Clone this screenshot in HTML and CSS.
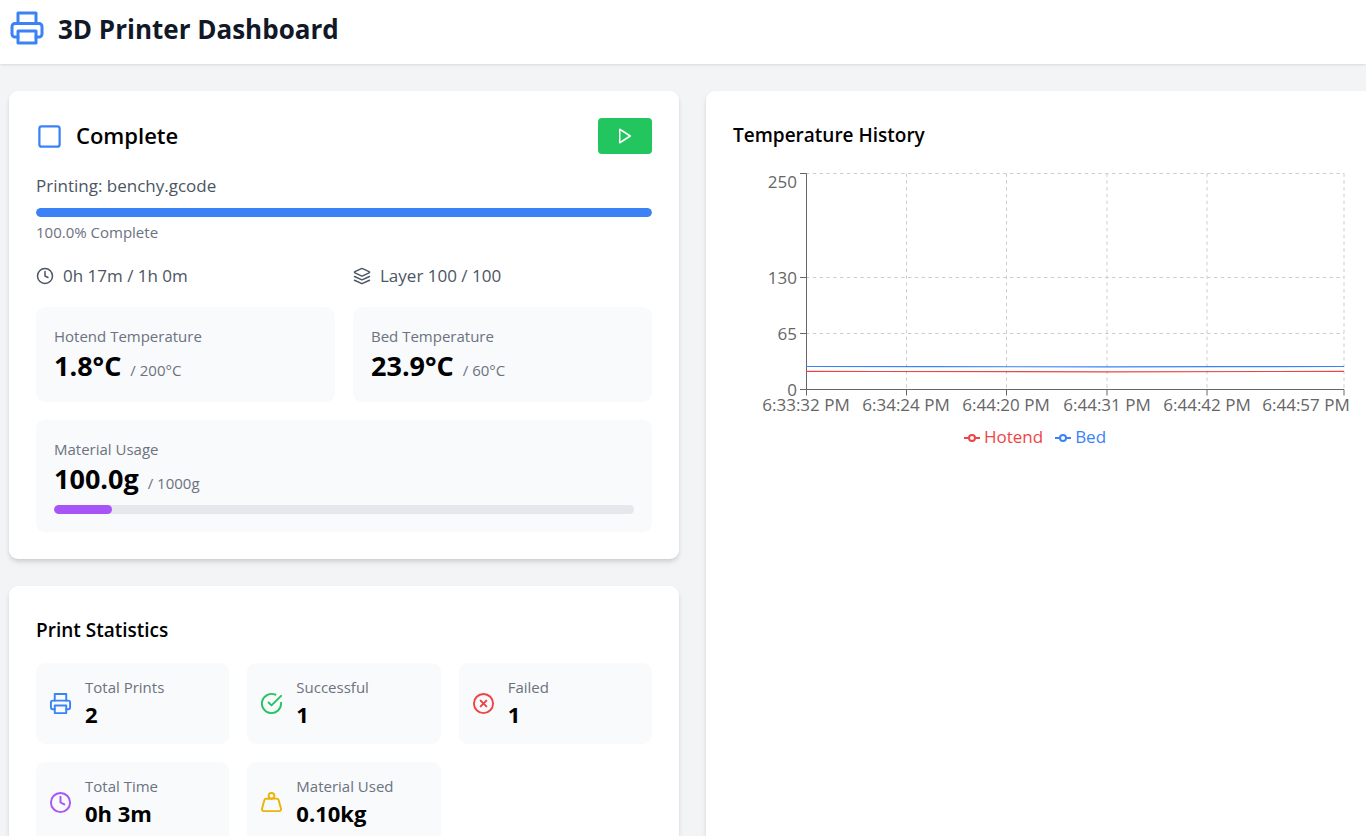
FILE: index.html
```html
<!DOCTYPE html>
<html lang="en">
<head>
<meta charset="utf-8">
<meta name="viewport" content="width=device-width, initial-scale=1">
<title>3D Printer Dashboard</title>
<link rel="stylesheet" href="styles.css">
</head>
<body>
<svg class="sprite" aria-hidden="true">
  <symbol id="i-printer" viewBox="0 0 24 24"><path d="M6 9V2h12v7"/><path d="M6 18H4a2 2 0 0 1-2-2v-5a2 2 0 0 1 2-2h16a2 2 0 0 1 2 2v5a2 2 0 0 1-2 2h-2"/><path d="M6 14h12v8H6z"/></symbol>
  <symbol id="i-square" viewBox="0 0 24 24"><rect x="3" y="3" width="18" height="18" rx="2"/></symbol>
  <symbol id="i-play" viewBox="0 0 24 24"><path d="M5 3l14 9-14 9z"/></symbol>
  <symbol id="i-clock" viewBox="0 0 24 24"><circle cx="12" cy="12" r="10"/><path d="M12 6v6l4 2"/></symbol>
  <symbol id="i-layers" viewBox="0 0 24 24"><path d="m12.83 2.18a2 2 0 0 0-1.66 0L2.6 6.08a1 1 0 0 0 0 1.83l8.58 3.91a2 2 0 0 0 1.66 0l8.58-3.9a1 1 0 0 0 0-1.83Z"/><path d="m22 17.65-9.17 4.16a2 2 0 0 1-1.66 0L2 17.65"/><path d="m22 12.65-9.17 4.16a2 2 0 0 1-1.66 0L2 12.65"/></symbol>
  <symbol id="i-check" viewBox="0 0 24 24"><path d="M22 11.08V12a10 10 0 1 1-5.93-9.14"/><path d="m9 11 3 3L22 4"/></symbol>
  <symbol id="i-x" viewBox="0 0 24 24"><circle cx="12" cy="12" r="10"/><path d="m15 9-6 6"/><path d="m9 9 6 6"/></symbol>
  <symbol id="i-weight" viewBox="0 0 24 24"><circle cx="12" cy="5" r="3"/><path d="M6.5 8a2 2 0 0 0-1.905 1.46L2.1 18.5A2 2 0 0 0 4 21h16a2 2 0 0 0 1.925-2.54L19.4 9.5A2 2 0 0 0 17.48 8Z"/></symbol>
</svg>

<header class="topbar">
  <svg class="icon icon-xl blue" aria-hidden="true"><use href="#i-printer"/></svg>
  <h1 class="topbar-title">3D Printer Dashboard</h1>
</header>

<main class="dashboard">
  <div class="column">
    <section class="card">
      <div class="status-head">
        <svg class="icon icon-lg blue" aria-hidden="true"><use href="#i-square"/></svg>
        <h2 class="status-title">Complete</h2>
        <button class="play" type="button" aria-label="Start print"><svg class="icon icon-sm" aria-hidden="true"><use href="#i-play"/></svg></button>
      </div>
      <div class="job">
        <p class="job-name">Printing: benchy.gcode</p>
        <div class="track" role="progressbar" aria-label="Print progress" aria-valuenow="100"><div class="fill fill-blue" style="width:100%"></div></div>
        <p class="label job-percent">100.0% Complete</p>
      </div>
      <div class="pair">
        <div class="meta"><svg class="icon icon-sm" aria-hidden="true"><use href="#i-clock"/></svg><span>0h 17m / 1h 0m</span></div>
        <div class="meta"><svg class="icon icon-sm" aria-hidden="true"><use href="#i-layers"/></svg><span>Layer 100 / 100</span></div>
      </div>
      <div class="pair">
        <div class="panel">
          <p class="label">Hotend Temperature</p>
          <p class="reading"><strong>1.8°C</strong><span class="label">/ 200°C</span></p>
        </div>
        <div class="panel">
          <p class="label">Bed Temperature</p>
          <p class="reading"><strong>23.9°C</strong><span class="label">/ 60°C</span></p>
        </div>
      </div>
      <div class="panel">
        <p class="label">Material Usage</p>
        <p class="reading"><strong>100.0g</strong><span class="label">/ 1000g</span></p>
        <div class="track track-material" role="progressbar" aria-label="Material usage" aria-valuenow="10"><div class="fill fill-purple" style="width:10%"></div></div>
      </div>
    </section>

    <section class="card">
      <h2 class="card-title">Print Statistics</h2>
      <div class="stats">
        <div class="stat"><svg class="icon icon-md blue" aria-hidden="true"><use href="#i-printer"/></svg><div><p class="label">Total Prints</p><p class="stat-value">2</p></div></div>
        <div class="stat"><svg class="icon icon-md green" aria-hidden="true"><use href="#i-check"/></svg><div><p class="label">Successful</p><p class="stat-value">1</p></div></div>
        <div class="stat"><svg class="icon icon-md red" aria-hidden="true"><use href="#i-x"/></svg><div><p class="label">Failed</p><p class="stat-value">1</p></div></div>
        <div class="stat"><svg class="icon icon-md purple" aria-hidden="true"><use href="#i-clock"/></svg><div><p class="label">Total Time</p><p class="stat-value">0h 3m</p></div></div>
        <div class="stat"><svg class="icon icon-md yellow" aria-hidden="true"><use href="#i-weight"/></svg><div><p class="label">Material Used</p><p class="stat-value">0.10kg</p></div></div>
      </div>
    </section>
  </div>

  <section class="card history">
    <h2 class="card-title">Temperature History</h2>
    <svg class="chart" viewBox="0 0 616 255" role="img" aria-label="Hotend and bed temperature over time">
      <g class="grid">
        <path d="M73 5.5H611M73 109.5H611M73 165.5H611"/>
        <path d="M173.5 5.5V221M273.5 5.5V221M374 5.5V221M474 5.5V221M611 5.5V221"/>
      </g>
      <path class="axis" d="M73.5 5.5V221.5M67 5.5H73.5M67 109.5H73.5M67 165.5H73.5M67 221.5H611M73.5 221.5V227.5M173.5 221.5V227.5M273.5 221.5V227.5M374 221.5V227.5M474 221.5V227.5M611 221.5V227.5"/>
      <path class="line line-hotend" d="M73 203.4L142 203.5L374 203.8L541 203.5L611 203.4"/>
      <path class="line line-bed" d="M73 198.5L196 198.6L374 198.9L488 198.6L611 198.5"/>
      <g class="tick tick-y">
        <text x="64" y="20">250</text>
        <text x="64" y="116">130</text>
        <text x="64" y="172">65</text>
        <text x="64" y="228">0</text>
      </g>
      <g class="tick tick-x">
        <text x="73" y="243">6:33:32 PM</text>
        <text x="173" y="243">6:34:24 PM</text>
        <text x="273" y="243">6:44:20 PM</text>
        <text x="374" y="243">6:44:31 PM</text>
        <text x="474" y="243">6:44:42 PM</text>
        <text x="573" y="243">6:44:57 PM</text>
      </g>
    </svg>
    <ul class="legend">
      <li class="legend-item red"><svg class="legend-mark" viewBox="0 0 16 16" aria-hidden="true"><path d="M0 9h5M11 9h5"/><circle cx="8" cy="9" r="3"/></svg>Hotend</li>
      <li class="legend-item blue"><svg class="legend-mark" viewBox="0 0 16 16" aria-hidden="true"><path d="M0 9h5M11 9h5"/><circle cx="8" cy="9" r="3"/></svg>Bed</li>
    </ul>
  </section>
</main>
</body>
</html>
```
FILE: styles.css
```css
* { box-sizing: border-box; }

body {
  margin: 0;
  background: #f3f4f6;
  color: #000;
  font-family: "Open Sans", "Noto Sans", sans-serif;
  font-size: 17px;
  line-height: 27px;
  overflow-x: hidden;
}

h1, h2, p, ul { margin: 0; padding: 0; }

.sprite { display: none; }

.icon {
  flex: none;
  fill: none;
  stroke: currentColor;
  stroke-width: 2;
  stroke-linecap: round;
  stroke-linejoin: round;
}
.icon-sm { width: 18px; height: 18px; }
.icon-md { width: 23px; height: 23px; }
.icon-lg { width: 27px; height: 27px; }
.icon-xl { width: 36px; height: 36px; }

.blue { color: #3b82f6; }
.green { color: #22c55e; }
.red { color: #ef4444; }
.purple { color: #a855f7; }
.yellow { color: #eab308; }

.topbar {
  display: flex;
  align-items: center;
  gap: 13px;
  padding: 10px 9px 18px;
  background: #fff;
  box-shadow: 0 1px 3px rgba(0, 0, 0, 0.08), 0 1px 2px rgba(0, 0, 0, 0.04);
}
.topbar-title {
  padding-top: 2px;
  color: #111827;
  font-size: 26px;
  font-weight: 700;
  line-height: 34px;
}

/* The second column runs slightly past the right edge of the window. */
.dashboard {
  display: grid;
  grid-template-columns: repeat(2, minmax(0, 1fr));
  gap: 27px;
  margin-right: -10px;
  padding: 27px 0 27px 9px;
}
.column {
  display: flex;
  flex-direction: column;
  gap: 27px;
}

.card {
  display: flex;
  flex-direction: column;
  gap: 18px;
  padding: 27px;
  background: #fff;
  border-radius: 9px;
  box-shadow: 0 4px 6px -1px rgba(0, 0, 0, 0.1), 0 2px 4px -1px rgba(0, 0, 0, 0.1);
}
.card-title {
  padding-top: 2px;
  font-size: 19px;
  font-weight: 600;
  line-height: 30px;
}

.status-head {
  display: flex;
  align-items: center;
  gap: 13px;
}
.status-title {
  flex: 1;
  padding-bottom: 2px;
  font-size: 22px;
  font-weight: 600;
  line-height: 30px;
}
.play {
  display: flex;
  align-items: center;
  justify-content: center;
  width: 54px;
  height: 36px;
  padding: 0;
  border: 0;
  border-radius: 4px;
  background: #22c55e;
  color: #fff;
}

.job-name { margin-bottom: 9px; color: #4b5563; }
.job-percent { margin-top: 4px; }

.label {
  color: #6b7280;
  font-size: 15px;
  font-weight: 400;
  line-height: 23px;
}

.track {
  height: 9px;
  overflow: hidden;
  border-radius: 5px;
  background: #e5e7eb;
}
.track-material { margin-top: 8px; }
.fill { height: 100%; border-radius: 5px; }
.fill-blue { background: #3b82f6; }
.fill-purple { background: #a855f7; }

.pair {
  display: grid;
  grid-template-columns: 1fr 1fr;
  gap: 18px;
}
.meta {
  display: flex;
  align-items: center;
  gap: 9px;
  color: #4b5563;
}

.panel {
  padding: 18px;
  border-radius: 9px;
  background: #f9fafb;
}
.reading {
  display: flex;
  align-items: baseline;
  gap: 9px;
  height: 36px;
  font-size: 27px;
  line-height: 36px;
}

.stats {
  display: grid;
  grid-template-columns: repeat(3, 1fr);
  gap: 18px;
}
.stat {
  display: flex;
  align-items: center;
  gap: 13px;
  padding: 13px;
  border-radius: 9px;
  background: #f9fafb;
}
.stat-value {
  padding-bottom: 2px;
  font-size: 22px;
  font-weight: 700;
  line-height: 30px;
}

.history { gap: 0; }
.chart {
  display: block;
  width: 100%;
  margin-top: 18px;
  overflow: visible;
}
.grid { fill: none; stroke: #ccc; stroke-dasharray: 3.4 3.4; }
.axis { fill: none; stroke: #666; }
.line { fill: none; stroke-width: 1.2; }
.line-hotend { stroke: #ef4444; }
.line-bed { stroke: #3b82f6; }
.tick { fill: #666; font-size: 17px; }
.tick-y { text-anchor: end; }
.tick-x { text-anchor: middle; }

.legend {
  display: flex;
  justify-content: center;
  list-style: none;
}
.legend-item {
  display: flex;
  align-items: center;
  gap: 4px;
  margin-right: 12px;
}
.legend-mark {
  width: 16px;
  height: 16px;
  fill: none;
  stroke: currentColor;
  stroke-width: 2;
}
```
